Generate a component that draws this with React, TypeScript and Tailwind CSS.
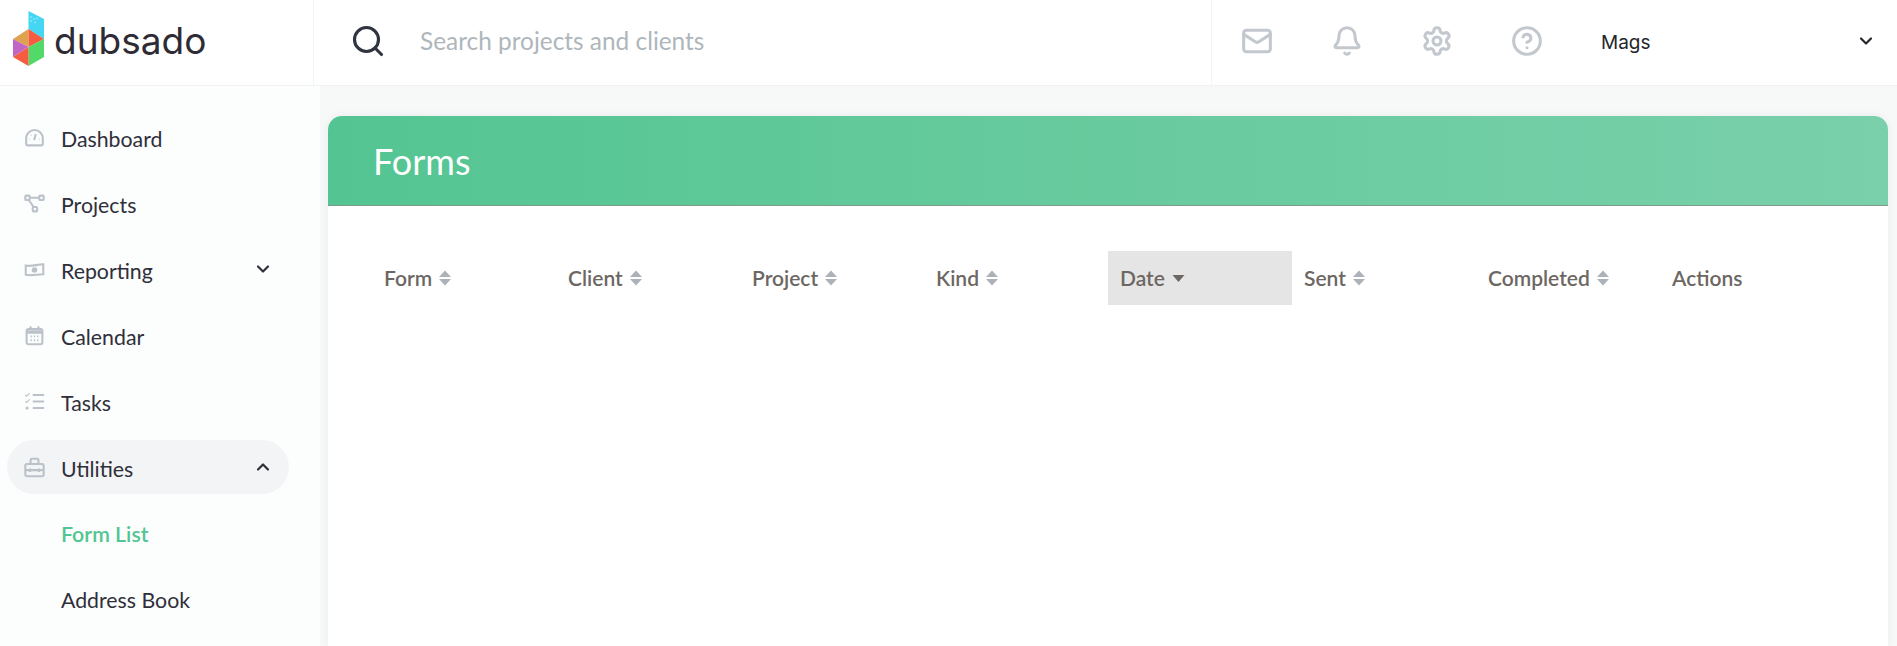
import { Bell, ChevronDown, ChevronUp, CircleHelp, Mail, Search, Settings } from "lucide-react";
import type { ReactNode } from "react";

const ICON = "h-[24px] w-[24px] fill-none stroke-[#bcc2c9] stroke-[2.4]";

function Logo() {
  return (
    <svg viewBox="0 0 34 56" className="mb-[8px] h-[56px] w-[34px] shrink-0">
      <polygon points="16.5,0 32,8 32,28 16.5,18" fill="#45d6f4" />
      <g fill="#c9f4fc">
        <circle cx="19" cy="6" r="0.7" />
        <circle cx="22" cy="8" r="0.7" />
        <circle cx="25" cy="7.500" r="0.7" />
        <circle cx="19" cy="10" r="0.7" />
        <circle cx="23" cy="11.500" r="0.7" />
      </g>
      <polygon points="1,28 16.5,18 16.5,36" fill="#dfa24e" />
      <polygon points="16.5,18 32,28 16.5,36" fill="#f55c40" />
      <polygon points="32,28 32,46 16.5,55 16.5,36" fill="#53d968" />
      <polygon points="1,28 16.5,36 1,46" fill="#c165c6" />
      <polygon points="1,46 16.5,36 16.5,55" fill="#f55c40" />
    </svg>
  );
}

function Dash() {
  return (
    <svg viewBox="0 0 24 24" className={ICON}>
      <path d="M4 21h16a1.500 1.500 0 0 0 1.500-1.500V13a9.500 9.500 0 0 0-19 0v6.500A1.500 1.500 0 0 0 4 21Z" />
      <path d="M11.500 15l2-7M6.500 14h.5M8 9l.4.4M17.500 14h.5" />
    </svg>
  );
}

function Nodes() {
  return (
    <svg viewBox="0 0 24 24" className={ICON}>
      <rect x="1.500" y="3" width="5" height="5" rx="1" />
      <rect x="17.500" y="3" width="5" height="5" rx="1" />
      <rect x="10" y="16" width="5" height="5" rx="1" />
      <path d="M6.500 5.500h11M5.500 8l5.500 8" />
    </svg>
  );
}

function Money() {
  return (
    <svg viewBox="0 0 24 24" className={ICON}>
      <path d="M2 7.500c7 1.500 13-1.500 20-1.500v11.500c-7 0-13 2-20 .5Z" />
      <circle cx="12" cy="12.500" r="2" className="fill-[#bcc2c9]" />
    </svg>
  );
}

function Cal() {
  return (
    <svg viewBox="0 0 24 24" className={ICON}>
      <rect x="3" y="4.500" width="18" height="17.500" rx="2" />
      <path d="M3 8h18" strokeWidth="4" />
      <path d="M7.500 1.500v4M16.500 1.500v4" />
      <path d="M7.500 13h1.500M11.200 13h1.500M15 13h1.500M7.500 17.500h1.500M11.200 17.500h1.500M15 17.500h1.500" strokeWidth="2.200" />
    </svg>
  );
}

function TaskList() {
  return (
    <svg viewBox="0 0 24 24" className={ICON}>
      <path d="M1.500 4.500l1.500 1.500L6.500 2.500M1.500 11.500l1.500 1.500L6.500 9.500" strokeWidth="1.300" />
      <path d="M10 4.500h13M10 12h13M10 19.500h13" strokeWidth="2.400" />
      <circle cx="3.500" cy="19.500" r="1.800" className="fill-[#bcc2c9]" strokeWidth="0" />
    </svg>
  );
}

function Toolbox() {
  return (
    <svg viewBox="0 0 24 24" className={ICON}>
      <rect x="1.500" y="8" width="21" height="14" rx="2" />
      <path d="M7.500 8V3.500A1.500 1.500 0 0 1 9 2h6a1.500 1.500 0 0 1 1.500 1.500V8M1.500 15h21M7 13v4M17 13v4" />
    </svg>
  );
}

function Sort() {
  return (
    <svg viewBox="0 0 12 16" className="h-[16px] w-[12px] fill-[#adb1b8]">
      <path d="M6 0.500 12 7H0ZM0 9h12l-6 6.500Z" />
    </svg>
  );
}

function NavItem({ icon, label, chevron, active }: { icon: ReactNode; label: string; chevron?: "up" | "down"; active?: boolean }) {
  return (
    <div className={`ml-[7px] flex h-[54px] w-[282px] items-center rounded-full pl-[17px] pr-[16px] ${active ? "bg-[#f3f4f6]" : ""}`}>
      <span className="flex w-[21px] items-center justify-center [&>svg]:h-[21px] [&>svg]:w-[21px]">{icon}</span>
      <span className="ml-[16px] flex-1 pt-[3px] text-[21.300px] leading-[28px] text-[#2f2f3a]">{label}</span>
      {chevron === "down" && <ChevronDown className="h-[20px] w-[20px] text-[#2f2f3a]" strokeWidth={2.6} />}
      {chevron === "up" && <ChevronUp className="h-[20px] w-[20px] text-[#2f2f3a]" strokeWidth={2.6} />}
    </div>
  );
}

const columns = ["Form", "Client", "Project", "Kind", "Date", "Sent", "Completed", "Actions"];

export default function App() {
  return (
    <div className="flex h-[646px] flex-col overflow-hidden bg-[#f7f8f8] font-['Lato','Liberation_Sans',sans-serif]">
      <header className="flex h-[86px] shrink-0 items-center border-b border-[#f1f2f4] bg-white">
        <div className="flex h-full w-[314px] items-center gap-[8px] border-r border-[#f3f4f5] pl-[12px]">
          <Logo />
          <span className="mb-[4px] font-['Inter',sans-serif] text-[37px] font-normal leading-none text-[#2f2b35]">dubsado</span>
        </div>
        <div className="flex flex-1 items-center pb-[3px] pl-[36px]">
          <Search className="h-[36px] w-[36px] text-[#2f3440]" strokeWidth={2.100} />
          <span className="ml-[34px] text-[24.400px] leading-[32px] text-[#aeb6bb]">Search projects and clients</span>
        </div>
        <div className="flex h-full w-[686px] items-center border-l border-[#f3f4f5] pl-[29px]">
          <div className="mb-[3px] flex items-center gap-[58px] text-[#c3c8ce]">
            <Mail className="h-[32px] w-[32px]" strokeWidth={2.300} />
            <Bell className="h-[32px] w-[32px]" strokeWidth={2.300} />
            <Settings className="h-[32px] w-[32px]" strokeWidth={2.300} />
            <CircleHelp className="h-[32px] w-[32px]" strokeWidth={2.300} />
          </div>
          <span className="ml-[58px] mt-[1px] flex-1 font-['Inter',sans-serif] text-[19px] leading-[26px] text-[#24262b]">Mags</span>
          <ChevronDown className="mb-[4px] mr-[21px] h-[20px] w-[20px] text-[#24262b]" strokeWidth={2.600} />
        </div>
      </header>

      <div className="flex min-h-0 flex-1">
        <aside className="flex w-[320px] shrink-0 flex-col gap-[12px] bg-[#fcfdfd] pt-[24px]">
          <NavItem icon={<Dash />} label="Dashboard" />
          <NavItem icon={<Nodes />} label="Projects" />
          <NavItem icon={<Money />} label="Reporting" chevron="down" />
          <NavItem icon={<Cal />} label="Calendar" />
          <NavItem icon={<TaskList />} label="Tasks" />
          <NavItem icon={<Toolbox />} label="Utilities" chevron="up" active />
          <div className="flex h-[54px] items-center pl-[61px] pt-[4px] text-[21.300px] font-semibold text-[#52c592]">Form List</div>
          <div className="flex h-[54px] items-center pl-[61px] pt-[4px] text-[21.300px] text-[#2f2f3a]">Address Book</div>
        </aside>

        <main className="min-w-0 flex-1 pl-[8px] pr-[9px] pt-[30px]">
          <div className="h-full rounded-t-[14px] bg-white bg-[radial-gradient(circle_at_1835px_560px,#f9fafa_0,#ffffff_110px)] shadow-[0_0_10px_rgba(0,0,0,0.06)]">
            <div className="flex h-[90px] items-center rounded-t-[14px] border-b border-[#7f9a8c] bg-gradient-to-r from-[#53c592] to-[#79d0aa] pl-[45px]">
              <h1 className="text-[36px] font-normal text-white">Forms</h1>
            </div>
            <div className="grid grid-cols-[repeat(8,184px)] pl-[44px] pt-[45px]">
              {columns.map((c) => (
                <div key={c} className={`flex h-[54px] items-center gap-[7px] pl-[12px] text-[21px] font-semibold text-[#6d6763] ${c === "Date" ? "bg-[#e4e5e4]" : ""}`}>
                  {c}
                  {c === "Date" ? (
                    <svg viewBox="0 0 12 7" className="h-[7px] w-[13px] fill-[#6d6763]">
                      <path d="M0 0h12L6 7Z" />
                    </svg>
                  ) : c !== "Actions" ? (
                    <Sort />
                  ) : null}
                </div>
              ))}
            </div>
          </div>
        </main>
      </div>
    </div>
  );
}
